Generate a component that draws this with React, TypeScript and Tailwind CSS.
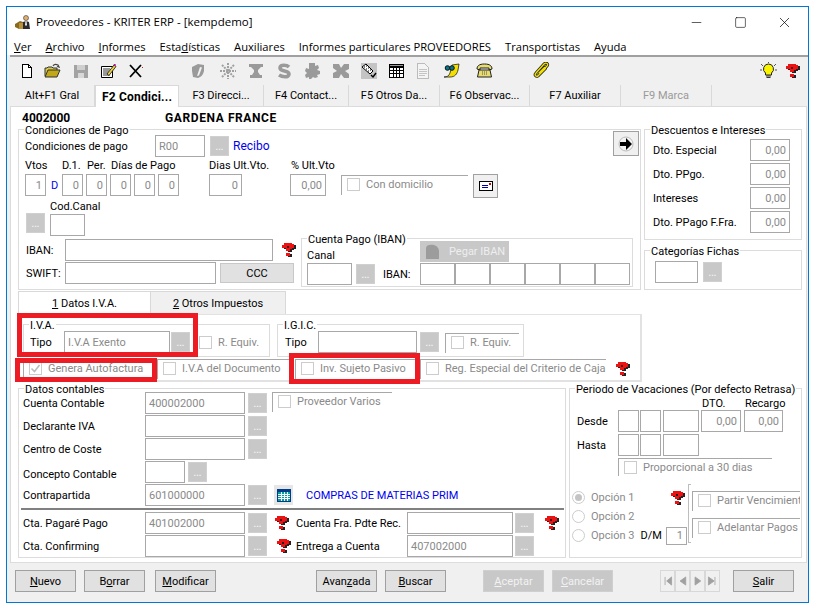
import type { ReactNode } from 'react'
import { Minus, Square, X } from 'lucide-react'

function Input({ w, value, right, h = 'h-[22px]' }: { w: string; value?: string; right?: boolean; h?: string }) {
  return (
    <div className={`${w} ${h} shrink-0 border border-[#a8a8a8] bg-white flex items-center px-[3px] text-[#8a8a8a] overflow-hidden ${right ? 'justify-end' : ''}`}>
      {value}
    </div>
  )
}

function Dots() {
  return (
    <div className="w-[19px] h-[20px] shrink-0 bg-[#c8c8c8] border border-[#d0d0d0] flex items-end justify-center pb-[3px] text-[#f2f2f2] font-bold text-[9px] leading-none">...</div>
  )
}

function Label({ children, className = '' }: { children: ReactNode; className?: string }) {
  return <div className={`h-[22px] shrink-0 flex items-center whitespace-nowrap text-black ${className}`}>{children}</div>
}

function Group({ title, className, children }: { title: string; className: string; children?: ReactNode }) {
  return (
    <div className={`relative border border-[#dcdcdc] shrink-0 ${className}`}>
      <div className="absolute left-[5px] -top-[5px] bg-white px-px leading-[11px] text-black whitespace-nowrap">{title}</div>
      {children}
    </div>
  )
}

function Check({ label, checked }: { label?: string; checked?: boolean }) {
  return (
    <div className="flex items-center text-[#8a8a8a] whitespace-nowrap">
      <div className="w-[13px] h-[13px] shrink-0 border border-[#cccccc] bg-white flex items-center justify-center">
        {checked && (
          <svg width="11" height="11" viewBox="0 0 11 11"><path d="M1.5 5.5l3 3 5-6.5" fill="none" stroke="#bcbcbc" strokeWidth="1.6" /></svg>
        )}
      </div>
      {label && <span className="ml-[6px]">{label}</span>}
    </div>
  )
}

// checkbox sitting in a frame where only top and left edges show
function Frame({ className, label, checked }: { className: string; label: string; checked?: boolean }) {
  return (
    <div className={`shrink-0 border-t border-l border-[#a8a8a8] pl-[5px] pt-[2px] overflow-hidden ${className}`}>
      <Check label={label} checked={checked} />
    </div>
  )
}

function Help({ className = '' }: { className?: string }) {
  const q = 'M3 0h8v1h2v4h-2v1H9v2H5V5h3V3H6v2H1V2h2zM5 10h4v3H5z'
  return (
    <svg width="16" height="14" viewBox="0 0 16 14" shapeRendering="crispEdges" className={`shrink-0 ${className}`}>
      <path d={q} transform="translate(2 1)" fill="#222" />
      <path d={q} fill="#ee1111" />
    </svg>
  )
}

function Btn({ children, className, off }: { children: ReactNode; className: string; off?: boolean }) {
  return (
    <div className={`h-[22px] w-[61px] shrink-0 border flex items-center justify-center ${off ? 'bg-[#c8c8c8] border-[#cfcfcf] text-[#f2f2f2]' : 'bg-[#e1e1e1] border-[#a0a0a0] text-black'} ${className}`}>
      {children}
    </div>
  )
}

const toolbarLeft = (
  <>
    <svg width="16" height="16" viewBox="0 0 16 16" className="ml-[9px]" shapeRendering="crispEdges"><path d="M3.5 1.5h6l3 3v10h-9z" fill="#fff" stroke="#000" /><path d="M9.5 1.5v3h3" fill="none" stroke="#000" /></svg>
    <svg width="17" height="16" viewBox="0 0 17 16" className="ml-[9px]"><path d="M1 13V5h2l1-1h4l1 1h4v2" fill="#d8c848" stroke="#333" /><path d="M1 14l3-7h12l-3 7z" fill="#c2a818" stroke="#333" /><path d="M9 3c1-2 3-2 5-1l1 2-2-.5" fill="none" stroke="#444" strokeWidth="1.2" /></svg>
    <svg width="16" height="16" viewBox="0 0 16 16" className="ml-[12px]" shapeRendering="crispEdges"><path d="M1 2h14v13H1z" fill="#a3a3a3" /><path d="M4 2h8v5H4z" fill="#cfcfcf" /><path d="M5 10h6v5H5z" fill="#d8d8d8" /></svg>
    <svg width="17" height="16" viewBox="0 0 17 16" className="ml-[11px]"><path d="M1.5 3.5h11v11h-11z" fill="#fff" stroke="#000" /><path d="M3 6h7M3 8h6M3 10h5M3 12h7" stroke="#333" /><path d="M7 11l7-9 2 1.500-7 9z" fill="#e8d040" stroke="#111" strokeWidth=".8" /><path d="M13.500 1h2l.5 1.500-1.500.5z" fill="#c0109a" /></svg>
    <svg width="16" height="16" viewBox="0 0 16 16" className="ml-[11px]"><path d="M2 2l11 12M13 2L2 14" stroke="#000" strokeWidth="1.800" /><path d="M14 4h1v1h-1z" fill="#c22" /></svg>
  </>
)

const toolbarMid = (
  <>
    <svg width="16" height="16" viewBox="0 0 16 16" className="ml-[46px]"><path d="M2 4l6-3 6 1v6c-1 4-3 6-6 7l-5-1-1-6z" fill="#9a9a9a" /><path d="M7 13l3-9 2 .5-3 8z" fill="#f0f0f0" /></svg>
    <svg width="16" height="16" viewBox="0 0 16 16" className="ml-[14px]"><path d="M8 0v16M0 8h16M2 2l12 12M14 2L2 14" stroke="#a0a0a0" strokeWidth="2" strokeDasharray="2 1" /></svg>
    <svg width="16" height="16" viewBox="0 0 16 16" className="ml-[12px]"><path d="M1 1h14v3h-2l-3 3v2l2 3h2v3H2v-3h2l2-3V7L3 4H1z" fill="#9a9a9a" /></svg>
    <svg width="14" height="16" viewBox="0 0 14 16" className="ml-[13px]"><path d="M12 4c-2-2-9-3-9 1s9 2 9 6-7 3-10 1" fill="none" stroke="#9a9a9a" strokeWidth="3.600" /></svg>
    <svg width="16" height="16" viewBox="0 0 16 16" className="ml-[13px]"><path d="M5 0h6v3l3-1 1 3-2 2 3 1v3l-3 1 1 2-3 1-2-1-2 2H5v-2l-3 1-1-3 2-2-2-2 1-3 3 1z" fill="#9a9a9a" /></svg>
    <svg width="16" height="16" viewBox="0 0 16 16" className="ml-[13px]"><path d="M0 1h6l2 4 3-4h5v5l-4 2 4 3v4h-5l-3-4-2 4H0v-5l4-2-4-3z" fill="#9a9a9a" /></svg>
    <div className="ml-[12px] w-[16px] h-[16px] bg-[#c4c4c4] flex">
      <svg width="16" height="16" viewBox="0 0 16 16"><path d="M1 4l4-3 7 7-3 3z" fill="#fff" stroke="#000" /><path d="M3 4h1M5 3h1M5 6h1M7 5h1M7 8h1M9 7h1" stroke="#000" /><path d="M10 12l2 2 3-4" fill="none" stroke="#000" strokeWidth="1.4" /></svg>
    </div>
    <svg width="15" height="14" viewBox="0 0 15 14" className="ml-[12px]" shapeRendering="crispEdges"><path d="M0 0h15v14H0z" fill="#000" /><path d="M1 1h13v1H1z" fill="#999" /><path d="M1 4h3v2H1zM5 4h2v2H5zM8 4h2v2H8zM11 4h3v2h-3zM1 7h3v2H1zM5 7h2v2H5zM8 7h2v2H8zM11 7h3v2h-3zM1 10h3v3H1zM5 10h2v3H5zM8 10h2v3H8zM11 10h3v3h-3z" fill="#fff" /></svg>
    <svg width="12" height="16" viewBox="0 0 12 16" className="ml-[13px]" shapeRendering="crispEdges"><path d="M.5.5h7l4 4v11H.500z" fill="#f4f4f4" stroke="#bbb" /><path d="M2 6h8M2 8h8M2 10h8M2 12h6" stroke="#c4c4c4" /></svg>
    <svg width="17" height="16" viewBox="0 0 17 16" className="ml-[14px]"><path d="M1 14c3 0 5-1 6-4l2-8 7-1-1 6c-1 4-3 7-8 7z" fill="#f4e000" stroke="#222" strokeWidth=".8" /><circle cx="4.500" cy="5" r="2.300" fill="#00788a" stroke="#111" /><circle cx="9" cy="5" r="2.300" fill="#00788a" stroke="#111" /></svg>
    <svg width="17" height="15" viewBox="0 0 17 15" className="ml-[16px]"><path d="M1 6c0-3 2-5 7.500-5S16 3 16 6l-3 1V5H4v2z" fill="#e8dc70" stroke="#222" /><path d="M3 7h11l1.500 7h-14z" fill="#e8dc70" stroke="#222" /><path d="M6 9h5M6 11h5" stroke="#555" strokeDasharray="1 1" /></svg>
    <svg width="17" height="17" viewBox="0 0 17 17" className="ml-[40px]"><path d="M5 14L14 4c2-2-1-4-3-2L3 11c-2 2 0 4 2 3l7-7c1-1 0-2-1-1l-5 5" fill="none" stroke="#222" strokeWidth="3" /><path d="M5 14L14 4c2-2-1-4-3-2L3 11c-2 2 0 4 2 3l7-7c1-1 0-2-1-1l-5 5" fill="none" stroke="#f2e000" strokeWidth="1.400" /></svg>
  </>
)

const bulb = (
  <svg width="17" height="18" viewBox="0 0 17 18" className="ml-auto"><path d="M1 2l2 2M16 2l-2 2M0 8h2M15 8h2M8.500 0v1" stroke="#555" /><path d="M8.500 2a5 5 0 0 1 3 9v2h-6v-2a5 5 0 0 1 3-9z" fill="#fbf400" stroke="#222" /><path d="M6 14h5M6.500 15.500h4" stroke="#333" /></svg>
)

const tabs = ['F3 Direcci...', 'F4 Contact...', 'F5 Otros Da...', 'F6 Observac...', 'F7 Auxiliar']
const tabWidths = ['w-[85px]', 'w-[85px]', 'w-[91px]', 'w-[90px]', 'w-[91px]']

function RowBtn({ w, value, label, after, labelClass = '' }: { w: string; value?: string; label: string; after?: ReactNode; labelClass?: string }) {
  return (
    <div className="flex items-center h-[22px] mt-px">
      <Label className={`w-[122px] ${labelClass}`}>{label}</Label>
      <Input w={w} value={value} />
      <div className="ml-[3px] shrink-0"><Dots /></div>
      {after}
    </div>
  )
}

export default function App() {
  return (
    <div className="w-[815px] h-[607px] bg-white p-[6px] overflow-hidden [font-family:Roboto,sans-serif] text-[11px] leading-none">
      <div className="w-[803px] h-[597px] border border-[#0078d7] bg-[#f0f0f0] flex flex-col">
        {/* title bar */}
        <div className="h-[30px] bg-white flex items-center pl-[8px] [font-family:'Open_Sans',sans-serif] text-[11.5px] text-black shrink-0">
          <svg width="16" height="15" viewBox="0 0 16 15" className="mr-[5px]"><path d="M0 9l5-3 6 2v6H4l-4-2z" fill="#8a6a20" /><path d="M4 8h7v6H4z" fill="#b8923a" /><circle cx="11" cy="3" r="2.500" fill="#e0b070" stroke="#333" strokeWidth=".6" /><path d="M8 14V7l3-1 3 1 1 7z" fill="#2a2a2a" /><path d="M10.500 6h1l.5 4-1 1-1-1z" fill="#eee" /></svg>
          Proveedores - KRITER ERP - [kempdemo]
          <Minus size={15} strokeWidth={1} className="ml-auto" />
          <Square size={13} strokeWidth={1.1} className="ml-[30px]" />
          <X size={17} strokeWidth={1} className="ml-[29px] mr-[15px]" />
        </div>
        {/* menu */}
        <div className="h-[18px] bg-white flex items-center pl-[7px] pt-px gap-[14px] [font-family:'Open_Sans',sans-serif] text-[11.2px] text-black shrink-0">
          <span><u>V</u>er</span>
          <span><u>A</u>rchivo</span>
          <span><u>I</u>nformes</span>
          <span>Esta<u>d</u>ísticas</span>
          <span>Auxiliares</span>
          <span>Informes particulares PROVEEDORES</span>
          <span>Transportistas</span>
          <span>Ayuda</span>
        </div>
        {/* toolbar */}
        <div className="h-[29px] flex items-center border-t-2 border-[#a0a0a0] ml-[3px] pr-[7px] shrink-0">
          {toolbarLeft}
          {toolbarMid}
          {bulb}
          <Help className="ml-[8px]" />
        </div>
        {/* main tabs */}
        <div className="h-[22px] flex ml-[3px] pt-px shrink-0">
          <div className="w-[85px] border-r border-[#d9d9d9] flex items-center justify-center text-black">Alt+F1 Gral</div>
          <div className="w-[84px] h-[22px] bg-white border-x border-t border-[#d9d9d9] flex items-center justify-center font-bold text-[12px] tracking-[0.2px] text-black relative z-10">F2 Condici...</div>
          {tabs.map((t, i) => (
            <div key={t} className={`${tabWidths[i]} border-r border-[#d9d9d9] flex items-center justify-center text-black`}>{t}</div>
          ))}
          <div className="w-[91px] border-r border-[#d9d9d9] flex items-center justify-center text-[#9a9a9a]">F9 Marca</div>
        </div>
        {/* panel */}
        <div className="w-[797px] h-[457px] ml-[3px] bg-white border border-[#dcdcdc] pl-[7px] shrink-0">
          <div className="h-[22px] flex items-center pl-[4px] font-bold text-[12px] text-black">
            <span className="w-[143px]">4002000</span>
            <span className="tracking-[0.6px]">GARDENA FRANCE</span>
          </div>

          <div className="flex gap-[3px]">
            <Group title="Condiciones de Pago" className="w-[623px] h-[161px] pl-[6px]">
              <div className="flex items-end h-[26px] mt-px">
                <Label className="w-[130px]">Condiciones de pago</Label>
                <Input w="w-[50px]" value="R00" />
                <div className="ml-[5px] mb-px"><Dots /></div>
                <Label className="ml-[4px] !text-[#0000ee] text-[12px]">Recibo</Label>
                <div className="ml-auto mr-[1px] mb-px w-[26px] h-[25px] bg-[#f0f0f0] border border-[#a0a0a0] flex items-center justify-center">
                  <svg width="16" height="16" viewBox="0 0 16 16"><circle cx="8" cy="8" r="7" fill="#f4f4f4" stroke="#bbb" /><path d="M2 6h6V2l6 6-6 6v-4H2z" fill="#000" /></svg>
                </div>
              </div>
              <div className="flex h-[16px] items-center">
                <div className="w-[37px]">Vtos</div>
                <div className="w-[25px]">D.1.</div>
                <div className="w-[24px]">Per.</div>
                <div className="w-[98px]">Días de Pago</div>
                <div className="w-[82px]">Dias Ult.Vto.</div>
                <div>% Ult.Vto</div>
              </div>
              <div className="flex items-start h-[24px] mt-px">
                <Input w="w-[21px]" value="1" right />
                <Label className="w-[16px] pl-[5px] !text-[#0000ee]">D</Label>
                <Input w="w-[21px]" value="0" right />
                <div className="ml-[3px]"><Input w="w-[21px]" value="0" right /></div>
                <div className="ml-[3px]"><Input w="w-[21px]" value="0" right /></div>
                <div className="ml-[3px]"><Input w="w-[21px]" value="0" right /></div>
                <div className="ml-[3px]"><Input w="w-[21px]" value="0" right /></div>
                <div className="ml-[30px]"><Input w="w-[33px]" value="0" right /></div>
                <div className="ml-[48px]"><Input w="w-[36px]" value="0,00" right /></div>
                <Frame className="ml-[15px] mt-px w-[127px] h-[20px]" label="Con domicilio" />
                <div className="ml-[5px] w-[25px] h-[24px] bg-[#f0f0f0] border border-[#a0a0a0] flex items-center justify-center">
                  <svg width="14" height="10" viewBox="0 0 14 10" shapeRendering="crispEdges"><path d="M.5.5h13v9H.5z" fill="#fff" stroke="#000" /><path d="M3 4h6M3 6h6" stroke="#0000a0" /><path d="M10 2h2v2h-2z" fill="#c00" /></svg>
                </div>
              </div>
              <div className="h-[16px] ml-[25px] flex items-center">Cod.Canal</div>
              <div className="flex items-start h-[24px]">
                <div className="ml-px mt-[-1px]"><Dots /></div>
                <div className="ml-[5px]"><Input w="w-[35px]" /></div>
              </div>
              <div className="flex">
                <div className="w-[276px] shrink-0">
                  <div className="flex items-center h-[22px] mt-px">
                    <Label className="w-[40px] pl-px">IBAN:</Label>
                    <Input w="w-[208px]" />
                    <Help className="ml-[8px]" />
                  </div>
                  <div className="flex items-center h-[22px] mt-px">
                    <Label className="w-[40px] pl-px">SWIFT:</Label>
                    <Input w="w-[151px]" />
                    <div className="ml-[4px] w-[74px] h-[20px] bg-[#e1e1e1] border border-[#c8c8c8] flex items-center justify-center text-black">CCC</div>
                  </div>
                </div>
                <Group title="Cuenta Pago (IBAN)" className="w-[332px] h-[49px] flex items-end pl-[5px] pb-[1px]">
                  <div className="w-[45px] shrink-0">
                    <div className="h-[12px] leading-[12px] mb-[1px]">Canal</div>
                    <Input w="w-[45px]" />
                  </div>
                  <div className="ml-[4px] mb-px"><Dots /></div>
                  <Label className="ml-[8px] w-[37px]">IBAN:</Label>
                  <div>
                    <div className="w-[89px] h-[21px] bg-[#c8c8c8] flex items-center pl-[5px] mb-px text-[#eeeeee]">
                      <svg width="16" height="16" viewBox="0 0 16 16" className="mr-[8px] shrink-0"><path d="M1 4c0-3 4-4 8-3 3 1 5 3 5 7v7H1z" fill="#9c9c9c" /></svg>
                      Pegar IBAN
                    </div>
                    <div className="flex">
                      <Input w="w-[35px]" />
                      <Input w="w-[35px]" />
                      <Input w="w-[35px]" />
                      <Input w="w-[35px]" />
                      <Input w="w-[35px]" />
                      <Input w="w-[35px]" />
                    </div>
                  </div>
                </Group>
              </div>
            </Group>

            <div className="w-[158px] shrink-0">
              <Group title="Descuentos e Intereses" className="w-full h-[111px] pt-[9px] pl-[8px] pr-[11px] flex flex-col gap-[2px]">
                {['Dto. Especial', 'Dto. PPgo.', 'Intereses', 'Dto. PPago F.Fra.'].map(l => (
                  <div key={l} className="flex items-center justify-between h-[22px]">
                    <Label>{l}</Label>
                    <Input w="w-[40px]" value="0,00" right />
                  </div>
                ))}
              </Group>
              <Group title="Categorías Fichas" className="w-full h-[40px] mt-[10px] pl-[10px] pt-[10px] flex items-start gap-[5px]">
                <Input w="w-[43px]" />
                <div className="mt-px"><Dots /></div>
              </Group>
            </div>
          </div>

          {/* iva tabs */}
          <div className="relative w-[624px] mt-px">
            <div className="flex h-[23px]">
              <div className="w-[133px] h-[24px] bg-white border-x border-t border-[#d9d9d9] flex items-center justify-center relative z-10 text-black"><span><u>1</u> Datos I.V.A.</span></div>
              <div className="w-[135px] bg-[#f0f0f0] border-t border-r border-[#d9d9d9] flex items-center justify-center text-black"><span><u>2</u> Otros Impuestos</span></div>
            </div>
            <div className="h-[68px] border border-r-2 border-b-2 border-[#e2e2e2] pt-[9px] pl-[4px]">
              <div className="flex gap-[7px]">
                <Group title="I.V.A." className="w-[247px] h-[33px] flex items-start pt-[6px] pl-[6px]">
                  <Label className="w-[34px]">Tipo</Label>
                  <Input w="w-[106px]" value="I.V.A Exento" />
                  <div className="ml-px mt-px"><Dots /></div>
                  <div className="ml-[9px] mt-[5px]"><Check label="R. Equiv." /></div>
                </Group>
                <Group title="I.G.I.C." className="w-[247px] h-[33px] flex items-start pt-[6px] pl-[7px]">
                  <Label className="w-[33px]">Tipo</Label>
                  <Input w="w-[99px]" />
                  <div className="ml-[3px] mt-px"><Dots /></div>
                  <Frame className="ml-[6px] mt-[2px] w-[74px] h-[20px]" label="R. Equiv." />
                </Group>
              </div>
              <div className="flex items-center mt-[2px]">
                <Frame className="w-[132px] h-[20px]" label="Genera Autofactura" checked />
                <Frame className="ml-[2px] w-[134px] h-[20px]" label="I.V.A del Documento" />
                <Frame className="ml-[4px] w-[123px] h-[20px]" label="Inv. Sujeto Pasivo" />
                <Frame className="ml-[2px] w-[186px] h-[20px]" label="Reg. Especial del Criterio de Caja" />
                <Help className="ml-[9px]" />
              </div>
            </div>
            <div className="absolute left-[-1px] top-[22px] w-[181px] h-[44px] border-[5px] border-[#ed1c24] z-20" />
            <div className="absolute left-[-3px] top-[67px] w-[142px] h-[24px] border-[5px] border-[#ed1c24] z-20" />
            <div className="absolute left-[271px] top-[62px] w-[131px] h-[31px] border-[5px] border-[#ed1c24] z-20" />
          </div>

          {/* accounting and holidays */}
          <div className="flex gap-[3px] mt-[6px]">
            <Group title="Datos contables" className="w-[548px] h-[170px] pl-[4px] pt-[2px]">
              <RowBtn w="w-[100px]" value="400002000" label="Cuenta Contable" after={<Frame className="ml-[5px] -mt-[2px] w-[120px] h-[20px]" label="Proveedor Varios" />} />
              <RowBtn w="w-[100px]" label="Declarante IVA" />
              <RowBtn w="w-[100px]" label="Centro de Coste" />
              <RowBtn w="w-[40px]" label="Concepto Contable" labelClass="pt-[4px]" />
              <RowBtn
                w="w-[100px]"
                value="601000000"
                label="Contrapartida"
                after={
                  <>
                    <div className="ml-[7px] w-[19px] h-[20px] bg-[#e6e6e6] flex items-center justify-center shrink-0">
                      <svg width="14" height="13" viewBox="0 0 14 13" shapeRendering="crispEdges"><path d="M0 0h14v13H0z" fill="#003c8a" /><path d="M1 3h12v9H1z" fill="#00a0a0" /><path d="M1 5h12M1 7h12M1 9h12M4 3v9M7 3v9M10 3v9" stroke="#fff" /></svg>
                    </div>
                    <div className="ml-[13px] w-[152px] overflow-hidden whitespace-nowrap text-[#0000ee]">COMPRAS DE MATERIAS PRIMAS</div>
                  </>
                }
              />
              <div className="h-[2px] bg-[#808080] mt-[2px] mb-[2px] mr-px -ml-[2px]" />
              <RowBtn
                w="w-[100px]"
                value="401002000"
                label="Cta. Pagaré Pago"
                after={
                  <>
                    <Help className="ml-[7px]" />
                    <div className="ml-[6px] w-[111px] whitespace-nowrap">Cuenta Fra. Pdte Rec.</div>
                    <Input w="w-[106px]" />
                    <div className="ml-[2px]"><Dots /></div>
                    <Help className="ml-[10px]" />
                  </>
                }
              />
              <RowBtn
                w="w-[100px]"
                label="Cta. Confirming"
                after={
                  <>
                    <Help className="ml-[9px]" />
                    <div className="ml-[4px] w-[111px] whitespace-nowrap">Entrega a Cuenta</div>
                    <Input w="w-[106px]" value="407002000" />
                    <div className="ml-[2px]"><Dots /></div>
                  </>
                }
              />
            </Group>

            <Group title="Periodo de Vacaciones (Por defecto Retrasa)" className="w-[233px] h-[170px] pt-[7px]">
              <div className="flex h-[14px] items-center ml-[132px]">
                <div className="w-[43px]">DTO.</div>
                <div>Recargo</div>
              </div>
              <div className="flex items-center h-[22px] pl-[7px]">
                <Label className="w-[41px]">Desde</Label>
                <Input w="w-[21px]" />
                <div className="ml-px"><Input w="w-[21px]" /></div>
                <div className="ml-[2px]"><Input w="w-[36px]" /></div>
                <div className="ml-[2px]"><Input w="w-[40px]" value="0,00" right /></div>
                <div className="ml-[3px]"><Input w="w-[39px]" value="0,00" right /></div>
              </div>
              <div className="flex items-center h-[22px] pl-[7px] mt-[2px]">
                <Label className="w-[41px]">Hasta</Label>
                <Input w="w-[21px]" />
                <div className="ml-px"><Input w="w-[21px]" /></div>
                <div className="ml-[2px]"><Input w="w-[36px]" /></div>
              </div>
              <Frame className="mt-[2px] ml-[48px] w-[154px] h-[18px]" label="Proporcional a 30 dias" />
              <div className="flex mt-[8px]">
                <div className="w-[118px] shrink-0 pl-[2px] pt-[4px] text-[#8a8a8a]">
                  {['Opción 1', 'Opción 2', 'Opción 3'].map((o, i) => (
                    <div key={o} className="flex items-center h-[19px] whitespace-nowrap">
                      <div className="w-[13px] h-[13px] rounded-full border border-[#cccccc] bg-white flex items-center justify-center mr-[6px] shrink-0">
                        {i === 0 && <div className="w-[7px] h-[7px] rounded-full bg-[#c4c4c4]" />}
                      </div>
                      {o}
                      {i === 0 && <Help className="ml-auto mr-[2px]" />}
                      {i === 2 && (
                        <>
                          <span className="ml-[6px] text-black">D/M</span>
                          <div className="ml-[4px]"><Input w="w-[21px]" h="h-[18px]" value="1" right /></div>
                        </>
                      )}
                    </div>
                  ))}
                </div>
                <div className="w-[3px] h-[59px] border-l border-y border-[#bdbdbd] shrink-0" />
                <div className="pt-[7px] ml-px">
                  <Frame className="w-[108px] h-[20px]" label="Partir Vencimient" />
                  <Frame className="mt-[7px] w-[108px] h-[20px]" label="Adelantar Pagos" />
                </div>
              </div>
            </Group>
          </div>
        </div>

        {/* bottom buttons */}
        <div className="flex items-center mt-[7px] pl-[8px]">
          <Btn className=""><span><u>N</u>uevo</span></Btn>
          <Btn className="ml-[8px]"><span>B<u>o</u>rrar</span></Btn>
          <Btn className="ml-[10px]"><span><u>M</u>odificar</span></Btn>
          <Btn className="ml-[100px]"><span>Avan<u>z</u>ada</span></Btn>
          <Btn className="ml-[8px]"><span><u>B</u>uscar</span></Btn>
          <Btn className="ml-[37px]" off><span><u>A</u>ceptar</span></Btn>
          <Btn className="ml-[8px]" off><span><u>C</u>ancelar</span></Btn>
          <div className="ml-[47px] flex">
            {['M5 3v10M13 3L7 8l6 5z', 'M12 3L5 8l7 5z', 'M5 3l7 5-7 5z', 'M3 3l7 5-7 5zM11 3v10'].map(d => (
              <div key={d} className="w-[15px] h-[22px] border border-[#d8d8d8] flex items-center justify-center">
                <svg width="14" height="16" viewBox="0 0 16 16"><path d={d} fill="#a0a0a0" stroke="#a0a0a0" /></svg>
              </div>
            ))}
          </div>
          <Btn className="ml-[13px]"><span><u>S</u>alir</span></Btn>
        </div>
      </div>
    </div>
  )
}
